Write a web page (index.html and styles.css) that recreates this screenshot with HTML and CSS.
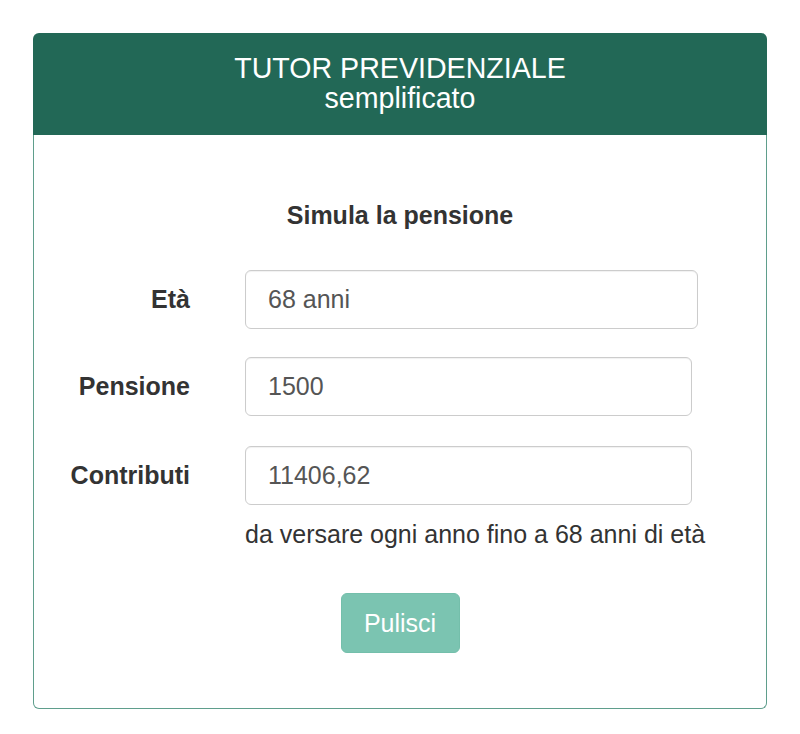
FILE: index.html
```html
<!DOCTYPE html>
<html lang="it">
<head>
<meta charset="utf-8">
<title>Tutor previdenziale</title>
<link rel="stylesheet" href="styles.css">
</head>
<body>
<div class="panel">
  <div class="panel-heading">
    <div class="title">TUTOR PREVIDENZIALE</div>
    <div class="subtitle">semplificato</div>
  </div>
  <div class="panel-body">
    <div class="form-title">Simula la pensione</div>
    <div class="form-row form-row-first">
      <label class="label">Età</label>
      <div class="field field-wide">68 anni</div>
    </div>
    <div class="form-row">
      <label class="label">Pensione</label>
      <div class="field">1500</div>
    </div>
    <div class="form-row form-row-last">
      <label class="label">Contributi</label>
      <div class="field">11406,62</div>
    </div>
    <div class="help">da versare ogni anno fino a 68 anni di età</div>
    <div class="actions">
      <button class="btn" type="button">Pulisci</button>
    </div>
  </div>
</div>
</body>
</html>
```
FILE: styles.css
```css
html, body {
  margin: 0;
  padding: 0;
  background: #ffffff;
}
body {
  font-family: "Liberation Sans", Arial, sans-serif;
  color: #333333;
  padding: 33px 0 0 33px;
}
.panel {
  width: 734px;
}
.panel-heading {
  background: #226856;
  color: #ffffff;
  text-align: center;
  border-radius: 6px 6px 0 0;
  padding: 20px 0 22px;
  height: 60px;
  font-size: 28.6px;
  line-height: 30px;
}
.panel-body {
  border: 1px solid #5f9e8c;
  border-top: none;
  border-radius: 0 0 6px 6px;
  padding: 63px 0 55px;
}
.form-title {
  text-align: center;
  font-weight: bold;
  font-size: 25px;
  line-height: 35px;
  margin-bottom: 37px;
}
.form-row {
  display: grid;
  grid-template-columns: 156px auto;
  column-gap: 55px;
  align-items: center;
  margin-bottom: 30px;
}
.form-row-first {
  margin-bottom: 28px;
}
.form-row-last {
  margin-bottom: 0;
}
.label {
  text-align: right;
  font-weight: bold;
  font-size: 25px;
  color: #333333;
}
.field {
  box-sizing: border-box;
  width: 447px;
  height: 59px;
  border: 1px solid #cccccc;
  border-radius: 6px;
  padding: 0 22px;
  display: flex;
  align-items: center;
  font-size: 25px;
  color: #555555;
  box-shadow: inset 0 1px 1px rgba(0, 0, 0, 0.06);
}
.field-wide {
  width: 453px;
}
.help {
  margin: 12px 0 0 211px;
  font-size: 25px;
  line-height: 35px;
  color: #333333;
}
.actions {
  margin-top: 41px;
  text-align: center;
}
.btn {
  font-family: "Liberation Sans", Arial, sans-serif;
  font-size: 25px;
  color: #ffffff;
  background: #7bc4b1;
  border: 1px solid #74bfab;
  border-radius: 6px;
  width: 119px;
  height: 60px;
  padding: 0;
  cursor: pointer;
}
```
